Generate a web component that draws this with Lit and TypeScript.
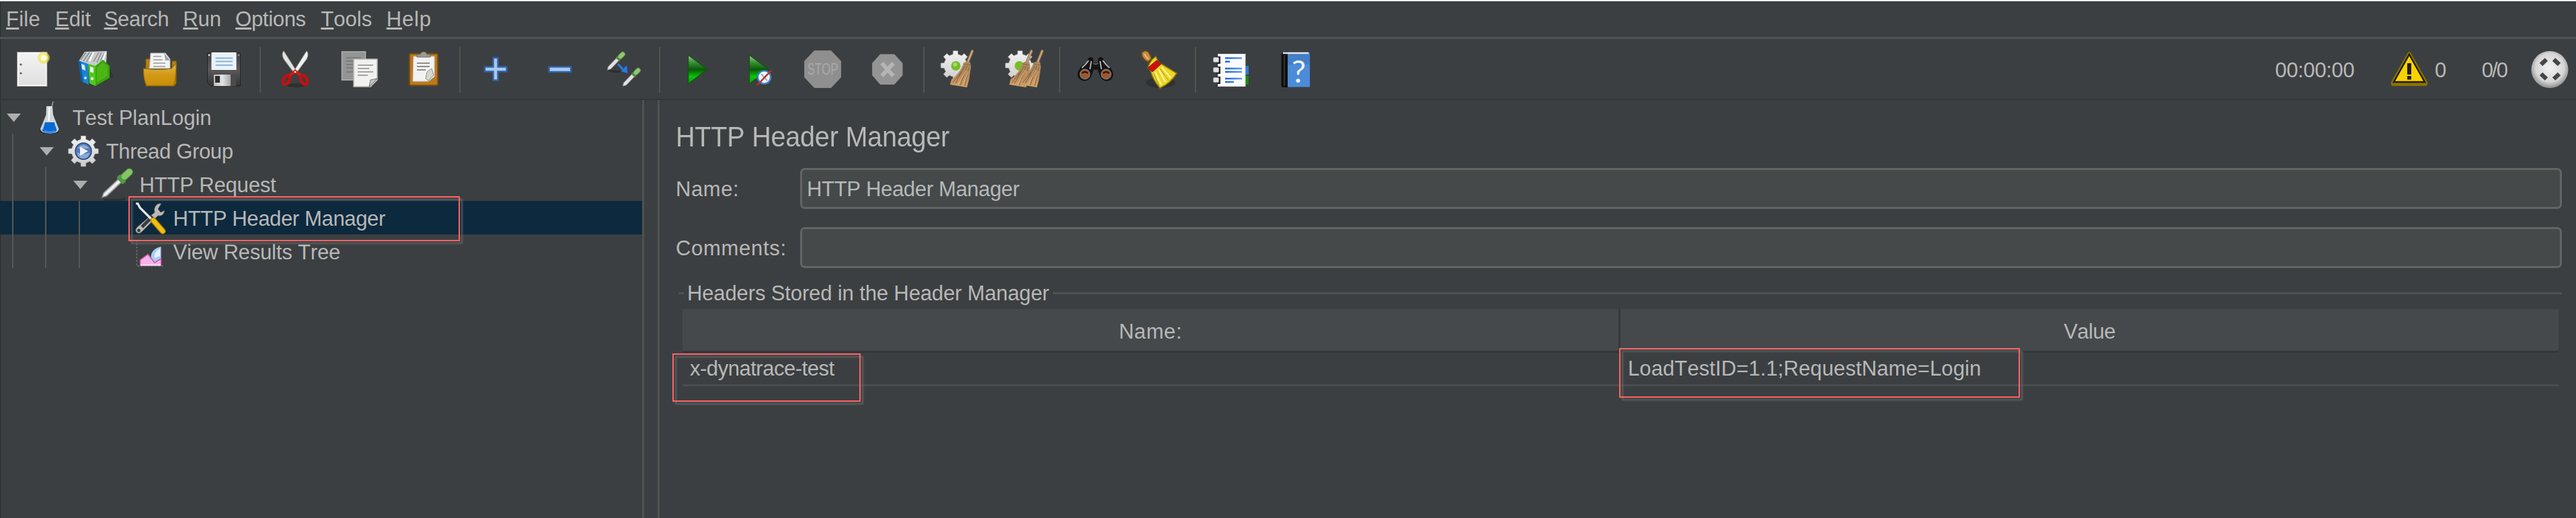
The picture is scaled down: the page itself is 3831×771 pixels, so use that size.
import { LitElement, html, css, svg, nothing } from "lit";
import { customElement, property } from "lit/decorators.js";
import { styleMap } from "lit/directives/style-map.js";

const FAMILY = '"Liberation Sans", Arial, sans-serif';
const ctx = document.createElement("canvas").getContext("2d")!;

/** A caption whose letters are spaced to fill a given ink width. */
@customElement("fit-label")
class FitLabel extends LitElement {
  @property() text = "";
  @property({ type: Number }) ink = 0;
  @property({ type: Number }) size = 31;
  @property({ type: Boolean }) mnemonic = false;

  static styles = css`
    :host { display: block; white-space: pre; color: #b7b8b8; flex: none; }
    span { display: block; font-family: "Liberation Sans", Arial, sans-serif; font-kerning: none; }
    u { text-decoration-thickness: 3px; text-underline-offset: 2px; text-decoration-skip-ink: none; }
  `;

  render() {
    (ctx as any).fontKerning = "none";
    ctx.font = `${this.size}px ${FAMILY}`;
    const m = ctx.measureText(this.text);
    const natural = m.actualBoundingBoxLeft + m.actualBoundingBoxRight;
    const n = this.text.length - 1;
    const spacing = this.ink && n > 0 ? (this.ink - natural) / n : 0;
    const style = styleMap({ fontSize: `${this.size}px`, letterSpacing: `${spacing.toFixed(3)}px` });
    return this.mnemonic
      ? html`<span style=${style}><u>${this.text[0]}</u>${this.text.slice(1)}</span>`
      : html`<span style=${style}>${this.text}</span>`;
  }
}

const gearPath = (cx: number, cy: number, ro: number, ri: number, teeth: number) => {
  const pts: string[] = [];
  for (let i = 0; i < teeth; i++) {
    const a = (i * 2 * Math.PI) / teeth - Math.PI / 2;
    const s = Math.PI / teeth;
    for (const [d, r] of [[-0.85, ri], [-0.56, ri], [-0.4, ro], [0.4, ro], [0.56, ri], [0.85, ri]]) {
      pts.push(`${(cx + r * Math.cos(a + d * s)).toFixed(1)},${(cy + r * Math.sin(a + d * s)).toFixed(1)}`);
    }
  }
  return pts.join(" ");
};

const smallBroom = (dx: number) => svg`
  <g transform="translate(${dx} 0)">
    <path d="M49 2 L42 19" stroke="#8a6a48" stroke-width="4.4" stroke-linecap="round"/>
    <path d="M49 2 L42 19" stroke="#c9a781" stroke-width="2.2" stroke-linecap="round"/>
    <path d="M36 20 Q40 16 46 19 L47 26 L44 45 L41 56 L16 52 L18 44 Q27 38 33 27 Z" fill="url(#straw)"/>
    <path d="M38 24 L24 50 M41 24 L31 53 M44 26 L38 54 M35 30 L20 49 M36 21 L46 23" stroke="#8b653f" stroke-width="1.1" fill="none"/>
    <path d="M40 30 L28 52 M43 32 L36 50" stroke="#e0b98a" stroke-width="1" fill="none"/>
  </g>`;

const pipette = (t: string) => svg`
  <g transform=${t}>
    <path d="M-22 0 L-17 -3 L4 -3 L4 3 L-17 3 Z" fill="#e2e2e2" stroke="#969696" stroke-width="1"/>
    <rect x="3" y="-4.6" width="4" height="9.2" rx="1.5" fill="#4f8a3c"/>
    <rect x="6" y="-4" width="14" height="8" rx="4" fill="#8fc66f" stroke="#5a9144" stroke-width="1"/>
  </g>`;

const icons: Record<string, unknown> = {
  new: svg`
    <rect x="9.5" y="4.5" width="42.5" height="49" fill="url(#paper)" stroke="#fff" stroke-width="2"/>
    <rect x="8.5" y="3.5" width="44.5" height="51" fill="none" stroke="#8c8c8a" stroke-width="1"/>
    <circle cx="14" cy="22" r="1.5" fill="#555"/><circle cx="14" cy="35" r="1.5" fill="#555"/>
    <circle cx="48" cy="12" r="9" fill="#efe04a" opacity=".65"/><circle cx="48" cy="12" r="6.5" fill="#f6ec7c"/><circle cx="48" cy="12" r="4" fill="#fffde9"/>`,
  templates: svg`
    <path d="M30 54 L50 43 L57 40 L50 30 Z" fill="#2c2e2f" opacity=".6"/>
    <path d="M4 17 L13 3 L46 2 L45 19 L30 26 L16 22 Z" fill="#c9cccd"/>
    <path d="M7 15 L15 4 M11 17 L20 4 M15 19 L24 4 M26 18 L34 4 M31 19 L38 4 M36 17 L43 4" stroke="#85888a" stroke-width="1.4"/>
    <path d="M20 17 L26 4 M40 15 L44 4" stroke="#fff" stroke-width="2.4"/>
    <path d="M3.500 16 L18 21 L19 52 L8 47 Z" fill="#1a84d8"/><path d="M3.500 16 L7 17.500 L11 48 L8 47 Z" fill="#0c5ea5"/>
    <path d="M8 21 l5 2 l1 8 l-5 -2 Z" fill="#d9ecfa"/><circle cx="14" cy="42" r="2" fill="#cfe6f8"/>
    <path d="M18 21 L29 24 L29 54 L20 50 Z" fill="#4fc81c"/><path d="M29 24 L40 15 L50 24 L50 42 L29 54 Z" fill="#3aa50c"/>
    <path d="M31 27 L40 19 L47 25 L47 39 L31 49 Z" fill="#58c21f" opacity=".6"/>
    <path d="M21 25 l5 1.500 v8 l-5 -1.500 Z" fill="#e9f8df"/><circle cx="24" cy="43" r="2.200" fill="#e9f8df"/>`,
  open: svg`
    <path d="M9 14 H17 V30 H48 V17 H54 V50 L51 54 H9 Z" fill="#b5820f" stroke="#8c6408"/>
    <path d="M16 5 H38 L45 14 V28 H14 Z" fill="#f2f2f2" stroke="#a9a9a9"/>
    <path d="M36 5 L45 16 H38 Z" fill="#9aa4ad"/>
    <path d="M20 10 H32 M20 15 H34 M20 20 H38 M20 25 H38" stroke="#9b9b9b" stroke-width="1.600"/>
    <path d="M5.500 28 Q27 31 47 28 L54 20 Q54 44 50 53.500 H10 Q5 44 5.500 28 Z" fill="url(#folder)" stroke="#966b08" stroke-width="1.200"/>`,
  save: svg`
    <path d="M5.500 5 H54.500 V54 H10 L5.500 49 Z" fill="url(#disk)" stroke="#232323"/>
    <rect x="12" y="4.500" width="36" height="25" fill="#e9f2fb" stroke="#fff"/>
    <path d="M17.500 12.500 H43 M17.500 17.500 H43 M17.500 23 H43" stroke="#8fb2d6" stroke-width="2"/>
    <rect x="15" y="37" width="25" height="17" fill="url(#metal)"/><rect x="17" y="39" width="7" height="10" fill="#2d2d2d"/>
    <rect x="40" y="37" width="8" height="17" fill="#4b4b4b"/><circle cx="8" cy="8" r="1.500" fill="#d8d8d8"/><circle cx="52" cy="8" r="1.500" fill="#8c8c8c"/>`,
  cut: svg`
    <ellipse cx="30" cy="53" rx="14" ry="3" fill="#2d2f30"/>
    <path d="M12 2 Q8 6 12 14 L27 34 L31 32 Z" fill="#e3e4e2" stroke="#9c9c9a"/>
    <path d="M46 2 Q50 6 46 14 L31 34 L27 32 Z" fill="#f1f1ef" stroke="#9c9c9a"/>
    <ellipse cx="16" cy="45" rx="4.500" ry="7" transform="rotate(30 16 45)" fill="none" stroke="#c3100f" stroke-width="4.500"/>
    <ellipse cx="42" cy="45" rx="4.500" ry="7" transform="rotate(-30 42 45)" fill="none" stroke="#c3100f" stroke-width="4.500"/>
    <path d="M21 38 L29 32 L37 38" stroke="#d81514" stroke-width="4.500" fill="none"/><circle cx="29" cy="33" r="1.500" fill="#eee"/>`,
  copy: svg`
    <rect x="3.500" y="3" width="35" height="42" fill="#929594" stroke="#b2b3b2" stroke-width="1.500"/>
    <path d="M10 12 H32 M10 17 H24 M10 22 H20 M10 27 H20 M10 33 H20" stroke="#747776" stroke-width="1.500"/>
    <path d="M21 14 H56 V45 L46 55 H21 Z" fill="#f1f2ef" stroke="#b5b6b4" stroke-width="1.500"/>
    <path d="M27 23 H50 M27 28 H44 M27 33 H50 M27 38 H42" stroke="#a5a6a4" stroke-width="1.800"/>
    <path d="M44 55 L46 45 L56 43 Z" fill="#c9cac7" stroke="#6b6c6a"/>`,
  paste: svg`
    <rect x="8" y="6" width="42" height="47" rx="2" fill="#b9791f" stroke="#7d4f0b" stroke-width="2"/>
    <path d="M14 10 H45 V40 L36 47 H13 Z" fill="#f2f2f0" stroke="#c9c9c7"/>
    <path d="M19 20 H38 M19 25 H38 M19 30 H32" stroke="#8f908e" stroke-width="1.800"/>
    <path d="M32 43 L34 33 L41 28 L44 38 L36 46 Z" fill="#d5d5d2" stroke="#8f908e"/>
    <path d="M19 11 V7 H24 Q25 3 29 3 Q33 3 34 7 H39 V11 Z" fill="#9c9a8c" stroke="#6e6c60"/>`,
  plus: svg`<path d="M26.500 12 H33.500 V25.500 H46.500 V32.500 H33.500 V45.500 H26.500 V32.500 H14 V25.500 H26.500 Z" fill="#a9c8ec" stroke="#2f63ab" stroke-width="2.400"/>`,
  minus: svg`<rect x="13.500" y="25.500" width="32.500" height="7.500" fill="#a9c8ec" stroke="#2f63ab" stroke-width="2.400"/>`,
  toggle: svg`
    <path d="M7 30 Q14 34 25 32" stroke="#2c2e2f" stroke-width="3" fill="none"/>
    ${pipette("translate(18.500 16.500) rotate(-46) scale(.86)")}
    ${pipette("translate(41.500 40.500) rotate(-46) scale(.86)")}
    <path d="M21 21 L28 29" stroke="#2b78ea" stroke-width="3"/><path d="M25.500 32 L34 23 L35.500 35 Z" fill="#2477f2"/>`,
  play: svg`<path d="M18.500 8 L47 29 L18.500 51 Z" fill="url(#go)" stroke="#135412" stroke-width="1.400"/>`,
  playNoTimers: svg`
    <path d="M14.500 8 L43 29 L14.500 51 Z" fill="url(#go)" stroke="#135412" stroke-width="1.400"/>
    <circle cx="36.500" cy="41" r="9.600" fill="#eef4fb" stroke="#3a80ce" stroke-width="2.400"/>
    <path d="M32 36 L41 46 M41 36 L32 46" stroke="#8a8a8a" stroke-width="1.500"/>
    <path d="M26 53 L47 31" stroke="#c92a2a" stroke-width="2.400"/>`,
  stop: svg`
    <path d="M16 1.500 H41 L55.500 17 V41 L41 56.500 H16 L1.500 41 V17 Z" fill="#8f8f8f" stroke="#868686" stroke-width="1"/>
    <text x="28.500" y="37" text-anchor="middle" font-size="24" textLength="46" lengthAdjust="spacingAndGlyphs" fill="#a9a9a9" font-family="Liberation Sans">STOP</text>`,
  shutdown: svg`
    <path d="M18 7 H39 L51 20 V38 L39 51.500 H18 L6.500 38 V20 Z" fill="#949494" stroke="#8a8a8a"/>
    <path d="M20.500 20 L37.500 39 M37.500 20 L20.500 39" stroke="#b5b5b5" stroke-width="6"/>`,
  clear: svg`
    <polygon points=${gearPath(24, 23.5, 22, 17, 8)} fill="url(#gearw)" stroke="#b9b9b9" stroke-width=".6"/>
    <circle cx="24.500" cy="24" r="7" fill="#77bd2b"/><circle cx="23.500" cy="22" r="3" fill="#a4dc62"/>
    ${smallBroom(0)}`,
  clearAll: svg`
    <polygon points=${gearPath(24, 23.5, 22, 17, 8)} fill="url(#gearw)" stroke="#b9b9b9" stroke-width=".6"/>
    <circle cx="23" cy="24" r="7" fill="#77bd2b"/>
    ${smallBroom(-8)}${smallBroom(8)}`,
  search: svg`
    <path d="M20 13 Q23 10 26 13 L27 20 L34 20 L35 13 Q38 10 41 13 L43 20 Q53 24 56 36 Q56 46 46 46 Q38 45 36 35 L34 29 H27 L25 35 Q23 45 14 46 Q4 45 4 36 Q7 24 17 20 Z" fill="#151515" stroke="#0b0b0b"/>
    <path d="M20 16 Q16 22 10 27 M41 16 Q45 22 51 27 M24 17 L22 29 M37 17 L39 29" stroke="#b9b9b9" stroke-width="1.800" fill="none"/>
    <path d="M27 20 Q30.500 23 34 20" stroke="#777" stroke-width="1.500" fill="none"/>
    <circle cx="14.500" cy="36.500" r="7.200" fill="#a2572a" stroke="#777" stroke-width="1.400"/><circle cx="46" cy="36.500" r="7.200" fill="#a2572a" stroke="#777" stroke-width="1.400"/>
    <path d="M10 35 Q14 31 19 35 M41.500 35 Q46 31 50.500 35" stroke="#321608" stroke-width="2.400" fill="none"/>`,
  broom: svg`
    <ellipse cx="31" cy="49" rx="22" ry="8" fill="#2b2d2e" opacity=".75"/>
    <path d="M18 15 L24 10 L27 17 L32 21 L55 35 Q46 50 30 57 Q19 44 16 31 L12 27 Q14 20 18 15 Z" fill="#ecd52b" stroke="#8e7a08" stroke-width="1.600"/>
    <path d="M23 33 L32 52 M28 29 L38 48 M33 26 L46 42" stroke="#fff48f" stroke-width="2.200"/>
    <path d="M20 34 L29 54 M30 28 L43 46" stroke="#b29b12" stroke-width="1"/>
    <path d="M25 16 L32 21 L19 33 L12 27 Z" fill="#c9130f" stroke="#9f0d0a"/>
    <path d="M3 5 Q8 -1 13 4 Q17 10 17 14 L12 18 Q3 13 3 5 Z" fill="#c98a3c" stroke="#7c4d14" stroke-width="1.500"/>
    <path d="M7 6 Q9 11 13 14" stroke="#ecc08a" stroke-width="2" fill="none"/>`,
  notebook: svg`
    <rect x="50" y="24" width="6" height="13" fill="#2d79d9"/><rect x="50" y="39" width="6" height="13" fill="#0f8a12"/>
    <rect x="10.500" y="6.500" width="40.500" height="48" fill="#fbfbfb" stroke="#d0d0d0"/>
    ${[15, 30, 45].map((y) => svg`<rect x="8" y=${y - 5} width="6" height="11" fill="#2b2b2b"/><rect x="3.500" y=${y - 3.5} width="8" height="7" rx="1.500" fill="#e2e2e2" stroke="#9b9b9b"/>`)}
    <path d="M21 12.500 H46 M21 17.700 H28 M21 28 H46 M21 33 H46 M21 43 H46 M21 48 H34" stroke="url(#ink)" stroke-width="2.600"/>`,
  help: svg`
    <path d="M8.500 6 L13 3.500 H19 V56 H10 L8.500 54 Z" fill="#0f0f10"/><path d="M13 8 V54" stroke="#3b3b3c" stroke-width="1.500"/>
    <rect x="18" y="4" width="33" height="51.500" fill="#4c8bd8"/><rect x="18" y="4" width="33" height="18" fill="#3f78bd" opacity=".6"/>
    <path d="M11 5 H49" stroke="#e2e6ea" stroke-width="2.400"/>
    <text x="34.500" y="49" text-anchor="middle" font-size="47" textLength="21" lengthAdjust="spacingAndGlyphs" fill="#eef4fb" font-family="Lato">?</text>`,
  warning: svg`
    <path d="M30 3 Q32 3 33 6 L57 48 Q58 53 55 54 H5 Q2 53 3 48 L27 6 Q28 3 30 3 Z" fill="#8a7200"/>
    <path d="M30 7 L53 48 H7 Z" fill="#f7d200" stroke="#201b00" stroke-width="2.400"/>
    <rect x="27" y="20" width="6" height="17" rx="1" fill="#221d00"/><rect x="27" y="39" width="6" height="5.500" rx="1" fill="#221d00"/>`,
  round: svg`
    <circle cx="30" cy="29.500" r="27.500" fill="url(#ball)"/>
    <g stroke="#444647" stroke-width="6.500"><path d="M17 22 L25 14.500 M36 14.500 L44 22 M17 36 L25 43.500 M36 43.500 L44 36"/></g>`,
  flask: svg`
    <ellipse cx="24" cy="47" rx="15" ry="3" fill="#2c2e2f"/>
    <path d="M30 2 L27 14" stroke="#9c9fa1" stroke-width="1.600"/>
    <path d="M20 9 H29 L30 22 L38.500 43 Q38 49 25 49.500 Q12 49 11 43 L19.500 22 Z" fill="#d3d6d9"/>
    <path d="M18 33 H32 L36 44 Q34 49 25 49 Q15 49 13 44 Z" fill="#0b68d0"/>
    <path d="M16.500 34 L13.500 44 M33 34 L36.500 44" stroke="#a9d0f5" stroke-width="2.400"/><path d="M24.500 10 L23.500 31" stroke="#fff" stroke-width="2"/>
    <path d="M17 46 Q25 50 33 46" stroke="#2f93ff" stroke-width="3" fill="none"/>`,
  gear: svg`
    <g transform="translate(25 26) scale(1 1.02)"><polygon points=${gearPath(0, 0, 22.5, 17.5, 8)} fill="url(#gearw)" stroke="#b4b4b4" stroke-width=".6"/>
    <circle r="12" fill="#5379b5" stroke="#27477c" stroke-width="1.500"/><path d="M-9.500 2 Q0 6 9.500 2 Q8 11 0 11 Q-8 11 -9.500 2 Z" fill="#85a8dc"/><path d="M-9 -4 Q0 -14 9 -4 Z" fill="#8ba8d4"/><path d="M-5 -6.500 L7 0 L-5 6.500 Z" fill="#f2f5fa"/></g>`,
  pipette: svg`
    <path d="M5 48 Q22 50 38 47" stroke="#2f3132" stroke-width="3" fill="none"/>
    <g transform="translate(25 24) rotate(-43)">
      <path d="M-31 0 L-24 -3.500 L7 -3.500 L7 3.500 L-24 3.500 Z" fill="#cfd0d0" stroke="#7f8181" stroke-width="1.200"/>
      <path d="M-26 0 H5" stroke="#fff" stroke-width="2"/>
      <rect x="5" y="-7" width="8" height="14" rx="2.500" fill="#4f9a3f"/>
      <rect x="10" y="-5" width="20" height="10" rx="5" fill="#84c566" stroke="#559443"/>
    </g>`,
  tools: svg`
    <path d="M41 4 Q35 3 32 8 Q29 13 31 17 L5 39 Q1 43 4 47 Q8 50 12 46 L36 22 Q44 24 46 14 L40 17 L36 12 Z" fill="#b9bbb9" stroke="#4d4f4f"/>
    <path d="M28 23 L12 39" stroke="#3c3e3e" stroke-width="5"/><circle cx="7.500" cy="44" r="2.400" fill="#333"/>
    <path d="M3 4 L6 4 L9 10 L27 28" stroke="#e5e5e5" stroke-width="3.200" fill="none"/>
    <path d="M29 29 L43 45" stroke="#a87c00" stroke-width="9" stroke-linecap="round"/><path d="M29 29 L43 45" stroke="#f2c010" stroke-width="6.400" stroke-linecap="round"/>`,
  results: svg`
    <path d="M4.500 8 V47 H44" stroke="#6c6e6f" stroke-width="1.500" stroke-dasharray="3 2" fill="none"/>
    <path d="M31 42 Q25 38 25.500 32 Q27 21 40.500 18 V36 Z" fill="#a9cdf4"/><path d="M31 35 Q29 27 39 21 V32 Z" fill="#e6f2fe"/>
    <path d="M9.500 46 V38 L21 29.500 L31 42 L40.500 36 V46 Z" fill="#f3b3ec" stroke="#d0559f" stroke-width="1.500"/>
    <path d="M10 45.500 H40" stroke="#fbe2f8" stroke-width="2"/>`,
};

const icon = (name: string, h = 60) => html`<svg class="icon" width=${h} height=${h} viewBox="0 0 ${h} ${h}" fill="none">${icons[name]}</svg>`;

const MENUS = [
  { text: "File", ink: 47.5, slot: 73.1 },
  { text: "Edit", ink: 51.5, slot: 72.6 },
  { text: "Search", ink: 94.5, slot: 117.6 },
  { text: "Run", ink: 53.5, slot: 77.8 },
  { text: "Options", ink: 103.5, slot: 127.2 },
  { text: "Tools", ink: 75.5, slot: 97.5 },
  { text: "Help", ink: 63, slot: 80 },
];

const TOOLS = [
  ["new", "templates", "open", "save"],
  ["cut", "copy", "paste"],
  ["plus", "minus", "toggle"],
  ["play", "playNoTimers", "stop", "shutdown"],
  ["clear", "clearAll"],
  ["search", "broom"],
  ["notebook", "help"],
];

const TREE = [
  { text: "Test PlanLogin", ink: 205.5, level: 0, icon: "flask", open: true },
  { text: "Thread Group", ink: 188, level: 1, icon: "gear", open: true },
  { text: "HTTP Request", ink: 201.5, level: 2, icon: "pipette", open: true },
  { text: "HTTP Header Manager", ink: 313.5, level: 3, icon: "tools", selected: true },
  { text: "View Results Tree", ink: 247.5, level: 3, icon: "results" },
];

@customElement("app-root")
class AppRoot extends LitElement {
  static styles = css`
    :host { display: block; height: 771px; overflow: hidden; background: #3c3f41; font-family: "Liberation Sans", Arial, sans-serif; }
    .app { display: flex; flex-direction: column; height: 771px; box-sizing: border-box; border-top: 2px solid #f4f4f4; box-shadow: inset 1px 0 #2a2c2d, inset 0 1px #2f3132; }
    .defs { position: absolute; width: 0; height: 0; }
    .icon { display: block; overflow: visible; flex: none; }
    .menu { display: flex; align-items: center; height: 52px; padding: 1px 0 0 9px; border-bottom: 3px solid #515253; flex: none; box-sizing: content-box; }
    .menu-item { flex: none; }
    .bar { display: flex; align-items: center; height: 87px; padding-top: 2px; border-bottom: 2px solid #333638; flex: none; }
    .tools { display: flex; align-items: center; flex: 1; margin-left: -0.5px; }
    .tool { width: 95.4px; display: flex; justify-content: center; flex: none; }
    .sep { width: 11.2px; display: flex; justify-content: center; flex: none; }
    .sep::before { content: ""; width: 2px; height: 68px; background: #53534f; }
    .status { display: flex; align-items: center; }
    .status fit-label { padding-top: 2px; }
    .clock { margin-right: 51.5px; }
    .warn { display: flex; align-items: center; gap: 8px; margin-right: 52.5px; }
    .round { margin-left: 34px; margin-right: 9px; }
    .body { display: flex; flex: 1; min-height: 0; }
    .tree { width: 955px; flex: none; }
    .node { position: relative; display: flex; align-items: center; height: 50px; }
    .node fit-label { padding: 4px 0 0 8.5px; }
    .node.selected { background: #0d293e; }
    .indent { width: 49.9px; align-self: stretch; flex: none; box-sizing: border-box; padding-left: 17.5px; }
    .indent::before { content: ""; display: block; width: 2px; height: 100%; background: #575856; }
    .twisty { width: 49.3px; flex: none; display: flex; box-sizing: border-box; padding: 2px 0 0 9.5px; }
    .split { width: 20px; flex: none; border: solid #50514f; border-width: 0 3px; }
    .panel { flex: 1; min-width: 0; padding: 18px 21px 0 24px; display: flex; flex-direction: column; }
    .title { height: 83px; line-height: 73px; flex: none; }
    .title fit-label { transform: scaleY(1.06); }
    .row { display: flex; align-items: center; height: 60px; margin-bottom: 28px; flex: none; }
    .caption { width: 185px; flex: none; padding-top: 3px; }
    .field { flex: 1; height: 61px; box-sizing: border-box; border: 3px solid #636465; border-radius: 7px; background: #45494a; display: flex; align-items: center; padding: 3px 0 0 7px; }
    .legend { display: flex; align-items: center; height: 30px; margin: -5px 0 9px 4px; flex: none; }
    .legend::before { content: ""; width: 8px; height: 3px; margin-right: 5px; background: #50514f; }
    .legend::after { content: ""; flex: 1; height: 3px; margin-left: 6px; background: #50514f; }
    .legend fit-label { padding-top: 2px; }
    .table { position: relative; margin: 0 5px 0 10px; }
    .head, .cells { display: grid; grid-template-columns: 1392px 1fr; }
    .head { height: 62px; background: #45494b; border-bottom: 3px solid #333739; }
    .th { display: flex; align-items: center; justify-content: center; padding-top: 6px; }
    .th + .th { border-left: 3px solid #34383a; }
    .cells { height: 47px; align-items: center; border-bottom: 3px solid #4b4e4f; }
    .td { padding: 1px 0 0 11px; }
    .td + .td { padding-left: 14px; }
    .mark { position: absolute; box-sizing: border-box; border: 2px solid #ff6464; z-index: 1; filter: drop-shadow(4px 4px 1px #626363); }
    .mark.node-mark { left: 191px; top: -7px; width: 493px; height: 67px; }
    .mark.name-mark { left: -15px; top: 66px; width: 280px; height: 72px; }
    .mark.value-mark { left: 1393px; top: 58px; width: 596px; height: 74px; }
  `;

  defs() {
    const g = (id: string, stops: string[], horiz = false) => svg`
      <linearGradient id=${id} x1="0" y1="0" x2=${horiz ? 1 : 0} y2=${horiz ? 0 : 1}>
        ${stops.map((c, i) => svg`<stop offset=${i / (stops.length - 1)} stop-color=${c} />`)}
      </linearGradient>`;
    return html`<svg class="defs"><defs>
      ${g("paper", ["#f4f4f4", "#dfdfdf"])}
      ${g("folder", ["#e3b75c", "#d39a16", "#c98e08"])}
      ${g("disk", ["#3f3f41", "#5a5a5c", "#343436"])}
      ${g("metal", ["#bcbcbc", "#e4e4e4", "#a5a5a5"], true)}
      ${g("go", ["#a5cfa3", "#3a9139", "#0a5a08", "#0cc40a", "#069a05"])}
      ${g("gearw", ["#f2f2f2", "#cdcdcd"])}
      ${g("straw", ["#a98862", "#b58a5c", "#d3a468"])}
      <linearGradient id="ink" gradientUnits="userSpaceOnUse" x1="21" y1="0" x2="46" y2="0"><stop offset="0" stop-color="#1b5fe8"/><stop offset="1" stop-color="#5d9cf6"/></linearGradient>
      <radialGradient id="ball" cx=".5" cy=".45" r=".55"><stop offset="0" stop-color="#f2f2f2"/><stop offset=".7" stop-color="#d6d6d6"/><stop offset="1" stop-color="#8f8f8f"/></radialGradient>
    </defs></svg>`;
  }

  render() {
    return html`
      ${this.defs()}
      <div class="app">
        <nav class="menu">
          ${MENUS.map((m) => html`<div class="menu-item" style=${styleMap({ width: `${m.slot}px` })}><fit-label .text=${m.text} .ink=${m.ink} mnemonic></fit-label></div>`)}
        </nav>
        <div class="bar">
          <div class="tools">
            ${TOOLS.map((group, i) => html`${i ? html`<div class="sep"></div>` : nothing}${group.map((n) => html`<div class="tool">${icon(n)}</div>`)}`)}
          </div>
          <div class="status">
            <fit-label class="clock" text="00:00:00" .ink=${117}></fit-label>
            <div class="warn">${icon("warning")}<fit-label text="0"></fit-label></div>
            <fit-label text="0/0" .ink=${38}></fit-label>
            <div class="round">${icon("round")}</div>
          </div>
        </div>
        <div class="body">
          <div class="tree">
            ${TREE.map((n) => html`
              <div class="node ${n.selected ? "selected" : ""}">
                ${Array.from({ length: n.level }, () => html`<div class="indent"></div>`)}
                <div class="twisty">${n.open ? html`<svg width="22" height="13"><path d="M0 0 H21 L10.500 12.500 Z" fill="#adadad"/></svg>` : nothing}</div>
                ${icon(n.icon, 50)}
                <fit-label .text=${n.text} .ink=${n.ink}></fit-label>
                ${n.selected ? html`<div class="mark node-mark"></div>` : nothing}
              </div>`)}
          </div>
          <div class="split"></div>
          <main class="panel">
            <div class="title"><fit-label text="HTTP Header Manager" .size=${39.5} .ink=${404}></fit-label></div>
            <div class="row">
              <div class="caption"><fit-label text="Name:" .ink=${89}></fit-label></div>
              <div class="field"><fit-label text="HTTP Header Manager" .ink=${314}></fit-label></div>
            </div>
            <div class="row">
              <div class="caption"><fit-label text="Comments:" .ink=${160.5}></fit-label></div>
              <div class="field"></div>
            </div>
            <div class="legend"><fit-label text="Headers Stored in the Header Manager" .ink=${536}></fit-label></div>
            <div class="table">
              <div class="head">
                <div class="th"><fit-label text="Name:" .ink=${89}></fit-label></div>
                <div class="th"><fit-label text="Value" .ink=${76}></fit-label></div>
              </div>
              <div class="cells">
                <div class="td"><fit-label text="x-dynatrace-test" .ink=${215.5}></fit-label></div>
                <div class="td"><fit-label text="LoadTestID=1.1;RequestName=Login" .ink=${522}></fit-label></div>
              </div>
              <div class="mark name-mark"></div>
              <div class="mark value-mark"></div>
            </div>
          </main>
        </div>
      </div>`;
  }
}
